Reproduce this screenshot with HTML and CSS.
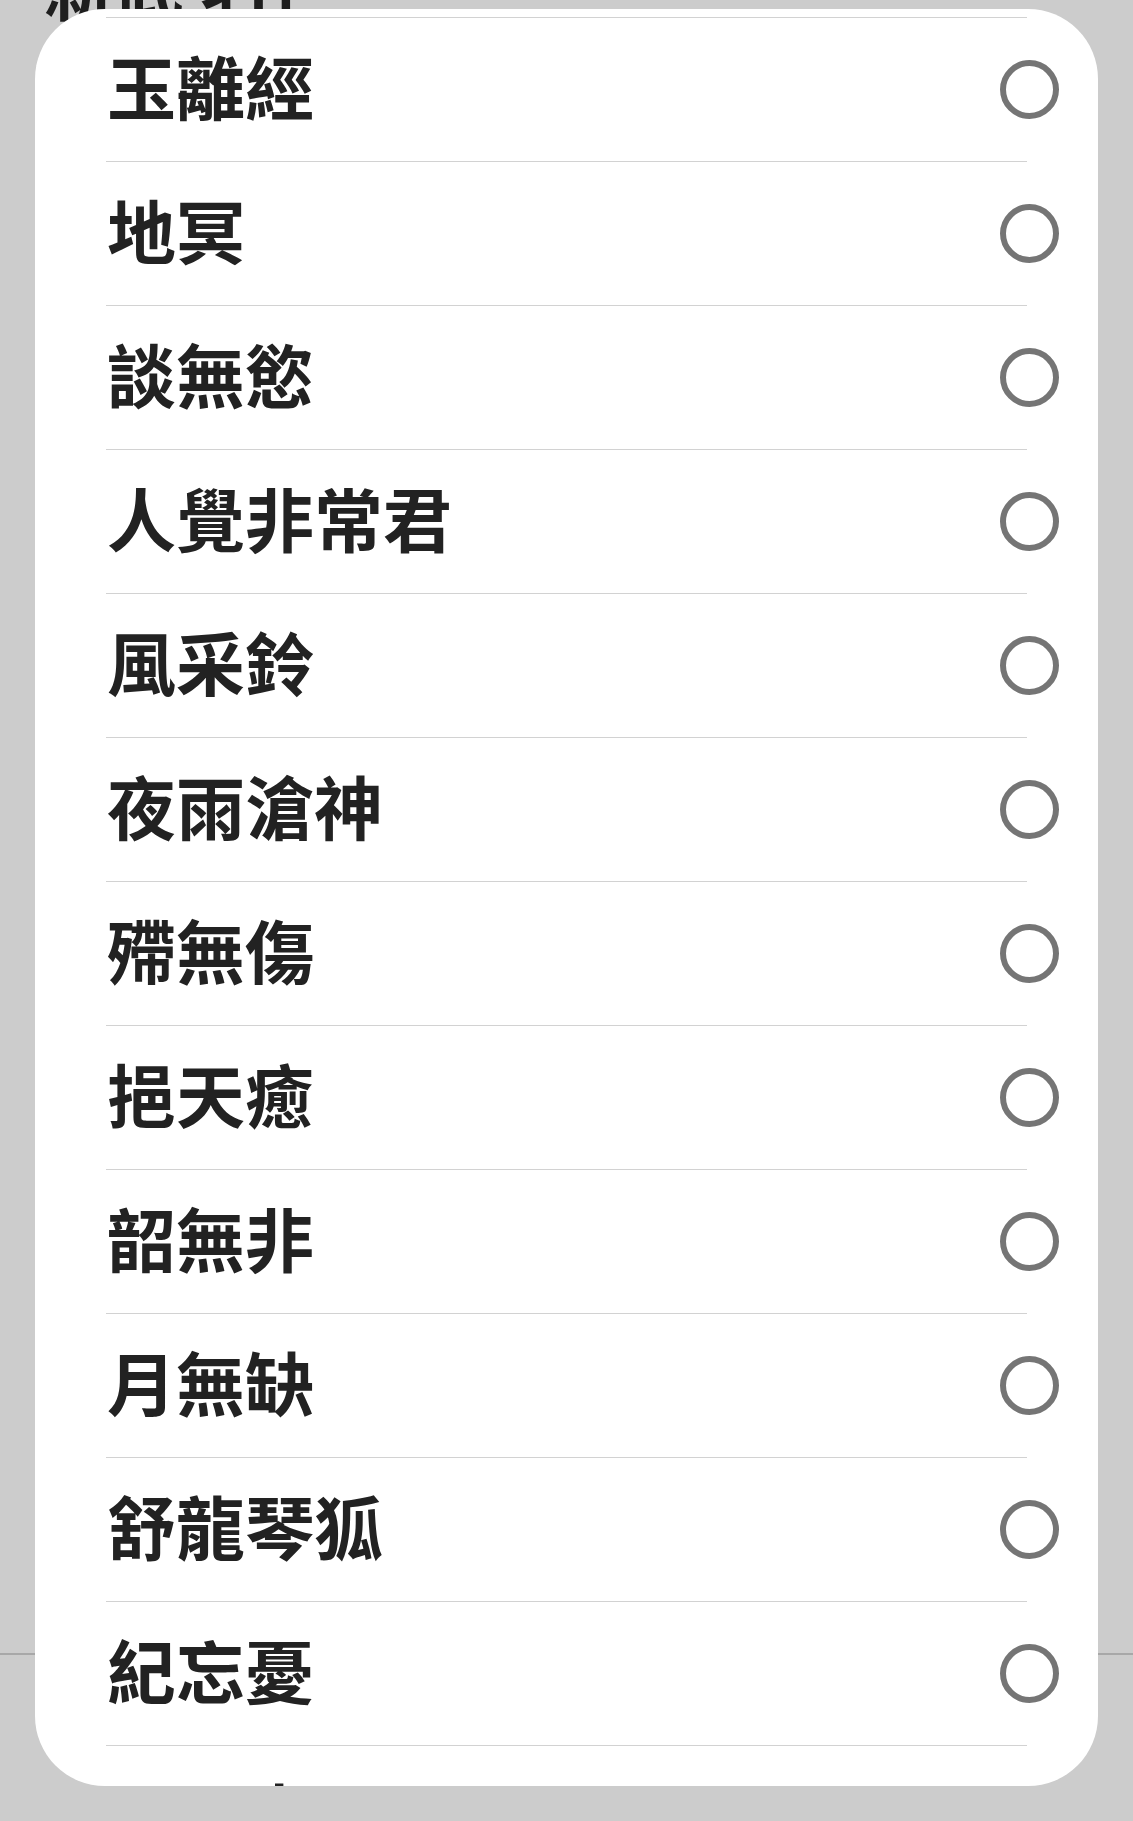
FILE: index.html
```html
<!DOCTYPE html>
<html lang="zh-Hant">
<head>
  <meta charset="UTF-8">
  <meta name="viewport" content="width=device-width, initial-scale=1.0">
  <title>選擇角色</title>
  <link rel="stylesheet" href="styles.css">
</head>
<body>

  <div class="page">
    <h1 class="page-title">新武 名仁</h1>
    <div class="page-rule"></div>
  </div>

  <div class="dialog">
    <ul class="choices">
      <li class="choice"><span class="name">玉離經</span><span class="radio"></span></li>
      <li class="choice"><span class="name">地冥</span><span class="radio"></span></li>
      <li class="choice"><span class="name">談無慾</span><span class="radio"></span></li>
      <li class="choice"><span class="name">人覺非常君</span><span class="radio"></span></li>
      <li class="choice"><span class="name">風采鈴</span><span class="radio"></span></li>
      <li class="choice"><span class="name">夜雨滄神</span><span class="radio"></span></li>
      <li class="choice"><span class="name">殢無傷</span><span class="radio"></span></li>
      <li class="choice"><span class="name">挹天癒</span><span class="radio"></span></li>
      <li class="choice"><span class="name">韶無非</span><span class="radio"></span></li>
      <li class="choice"><span class="name">月無缺</span><span class="radio"></span></li>
      <li class="choice"><span class="name">舒龍琴狐</span><span class="radio"></span></li>
      <li class="choice"><span class="name">紀忘憂</span><span class="radio"></span></li>
      <li class="choice"><span class="name">一頁書</span><span class="radio"></span></li>
    </ul>
  </div>

</body>
</html>
```

FILE: styles.css
```css
body {
  margin: 0;
  padding: 0;
  background-color: #cccccc;
  font-family: "Noto Sans CJK TC", "Noto Sans", sans-serif;
  color: #222;
}
.page {
  height: 1821px;
  overflow: hidden;
}
.page-title {
  height: 100px;
  margin: -64px 0 0 44px;
  font-size: 70px;
  font-weight: bold;
  line-height: 100px;
  color: #1e1e1e;
}
.page-rule {
  margin-top: 1617px;
  height: 2px;
  background-color: #a8a8a8;
}
.dialog {
  position: absolute;
  top: 9px;
  left: 35px;
  width: 1063px;
  height: 1777px;
  background-color: #fff;
  border-radius: 70px;
  overflow: hidden;
}
.choices {
  list-style: none;
  margin: 8px 71px 0 71px;
  padding: 0;
}
.choice {
  display: flex;
  align-items: center;
  justify-content: space-between;
  height: 143px;
  border-top: 1px solid #d2d2d2;
}
.name {
  padding: 0 0 8px 1px;
  font-size: 69px;
  font-weight: bold;
  line-height: 1;
  color: #222;
}
.radio {
  width: 59px;
  height: 59px;
  margin-right: -32px;
  border: 6px solid #757575;
  border-radius: 50%;
  box-sizing: border-box;
}
```
